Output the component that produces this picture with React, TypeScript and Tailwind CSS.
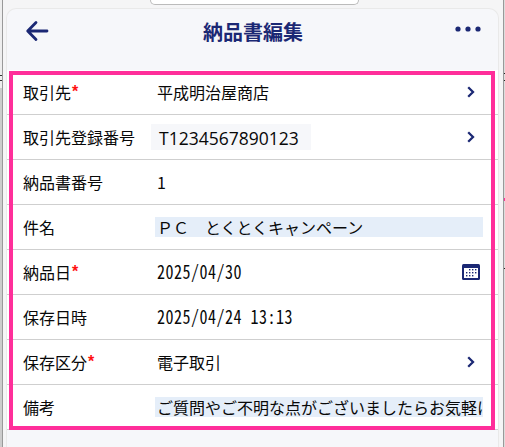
type Field = {
  label: string
  value: string
  required?: boolean
  kind?: 'code' | 'mono' | 'input'
  icon?: 'chevron' | 'calendar'
}

const fields: Field[] = [
  { label: '取引先', value: '平成明治屋商店', required: true, icon: 'chevron' },
  { label: '取引先登録番号', value: 'T1234567890123', kind: 'code', icon: 'chevron' },
  { label: '納品書番号', value: '1' },
  { label: '件名', value: 'ＰＣ　とくとくキャンペーン', kind: 'input' },
  { label: '納品日', value: '2025/04/30', required: true, kind: 'mono', icon: 'calendar' },
  { label: '保存日時', value: '2025/04/24 13:13', kind: 'mono' },
  { label: '保存区分', value: '電子取引', required: true, icon: 'chevron' },
  { label: '備考', value: 'ご質問やご不明な点がございましたらお気軽に', kind: 'input' },
]

function Chevron() {
  return (
    <svg className="mr-2 h-3 w-2 shrink-0" viewBox="0 0 8 12" fill="none" stroke="#1b2874" strokeWidth="2.3">
      <path d="M1.2 1.2 6 6 1.2 10.8" />
    </svg>
  )
}

function CalendarIcon() {
  return (
    <svg className="mr-[3px] h-4 w-[18px] shrink-0" viewBox="0 0 18 16">
      <rect width="18" height="16" rx="1.5" fill="#1b2874" />
      <rect x="2" y="4" width="14" height="10" fill="#fff" />
      <g fill="#1b2874">
        {[5, 8, 11].map(y => [4, 7, 10, 13].map(x => (
          (y !== 5 || x !== 4) && (y !== 11 || x !== 13) && <rect key={`${x}-${y}`} x={x} y={y} width="1.4" height="1.4" />
        )))}
      </g>
    </svg>
  )
}

function Value({ field }: { field: Field }) {
  if (field.kind === 'code') {
    return <div className="h-[26px] w-[160px] bg-[#f6f7fa] pl-2 font-['Open_Sans'] text-[17.5px] leading-[28px]">{field.value}</div>
  }
  if (field.kind === 'input') {
    return <div className="ml-1 h-5 min-w-0 flex-1 overflow-x-clip bg-[#e5eef9] pl-[2px] leading-5 whitespace-nowrap">{field.value}</div>
  }
  if (field.kind === 'mono') {
    return <div className="scale-y-[1.16] pb-[2px] pl-[6px] tracking-[0.5px] [font-feature-settings:'hwid']">{field.value}</div>
  }
  return <div className="pl-[6px]">{field.value}</div>
}

function Row({ field }: { field: Field }) {
  return (
    <div className="flex h-[45px] items-center border-b border-[#cfcfcf] pr-[15px] pl-4 text-base text-[#080808]">
      <div className="flex w-32 shrink-0">
        {field.label}
        {field.required && <span className="pl-px font-['Liberation_Sans'] font-bold text-[#ff1010]">*</span>}
      </div>
      <div className="flex min-w-0 flex-1 items-center"><Value field={field} /></div>
      {field.icon === 'chevron' && <Chevron />}
      {field.icon === 'calendar' && <CalendarIcon />}
    </div>
  )
}

export default function App() {
  return (
    <div className="relative flex h-[447px] w-[505px] justify-between overflow-hidden bg-[#f5f5f6] font-['Noto_Sans_CJK_JP',sans-serif]">
      {/* slivers of the page behind the sheet */}
      <div className="flex w-[3px] flex-col border-r border-[#999] bg-[#ccc]">
        <div className="h-[75px] bg-[#eee]" />
        <div className="h-[6px] border-y border-[#333] bg-[#eee]" />
        <div className="h-[7px] bg-[#eee]" />
      </div>

      <div className="mr-[1px] flex w-[493px] flex-col">
        <div className="flex h-2 justify-center pl-1">
          <div className="h-[5px] w-[209px] rounded-b-[12px] border border-t-0 border-[#bbb] bg-white" />
        </div>
        <div className="flex-1 overflow-hidden rounded-t-[10px] border border-b-0 border-[#e9e9e9] bg-[#f6f7fa]">
          <header className="flex h-[61px] items-start justify-between pr-[17px] pl-[18px] text-[#1b2874]">
            <svg className="mt-[10px] h-6 w-6" viewBox="0 0 24 24" fill="none" stroke="currentColor" strokeWidth="2.8" strokeLinecap="round" strokeLinejoin="round">
              <path d="M22 12H3M11 3.5 2.7 12l8.3 8.5" />
            </svg>
            <h1 className="mt-2 pl-[2px] text-xl leading-[30px] font-bold">納品書編集</h1>
            <svg className="mt-[17px] h-[6px] w-[26px]" viewBox="0 0 26 6" fill="currentColor">
              <circle cx="3" cy="3" r="2.6" />
              <circle cx="13" cy="3" r="2.6" />
              <circle cx="23" cy="3" r="2.6" />
            </svg>
          </header>
          <main className="bg-white">
            {fields.map(f => <Row key={f.label} field={f} />)}
          </main>
        </div>
      </div>

      <div className="flex w-[2px] flex-col border-l border-[#999] bg-[#ddd] pt-[73px]">
        <div className="h-2 border-y border-[#222]" />
        <div className="mt-[117px] h-[3px] bg-[#ff2e9a]" />
        <div className="mt-[67px] h-px bg-[#222]" />
      </div>

      {/* highlight frame over the form */}
      <div className="absolute top-[71px] left-[9px] h-[359px] w-[486px] border-4 border-[#ff2e9a]" />
    </div>
  )
}
